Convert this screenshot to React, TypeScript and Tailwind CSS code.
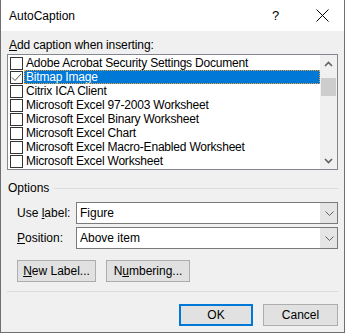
import { useState } from 'react'

const ITEMS = [
  'Adobe Acrobat Security Settings Document',
  'Bitmap Image',
  'Citrix ICA Client',
  'Microsoft Excel 97-2003 Worksheet',
  'Microsoft Excel Binary Worksheet',
  'Microsoft Excel Chart',
  'Microsoft Excel Macro-Enabled Worksheet',
  'Microsoft Excel Worksheet',
]

function Chevron({ up = false, className = '' }: { up?: boolean; className?: string }) {
  return (
    <svg width="9" height="6" viewBox="0 0 9 6" className={className}>
      <polyline
        points={up ? '1,5 4.5,1.5 8,5' : '1,1 4.5,4.5 8,1'}
        fill="none"
        stroke="currentColor"
        strokeWidth="1.6"
      />
    </svg>
  )
}

function Combo({ value }: { value: string }) {
  return (
    <div className="flex-1 h-[22px] flex bg-white border border-[#7a7a7a]">
      <div className="flex-1 pl-[3px] leading-[20px]">{value}</div>
      <div className="w-[17px] bg-[#e5e5e5] border-l border-[#e5e5e5] flex items-center justify-center text-[#606060]">
        <svg width="9" height="5" viewBox="0 0 9 5">
          <polyline points="0.5,0.5 4.5,4.5 8.5,0.5" fill="none" stroke="currentColor" strokeWidth="1" />
        </svg>
      </div>
    </div>
  )
}

export default function App() {
  const [selected, setSelected] = useState(1)

  return (
    <div className="w-[346px] h-[334px] bg-white" style={{ fontFamily: '"Liberation Sans", Arial, sans-serif' }}>
      <div className="w-[345px] h-[333px] flex flex-col border-l border-r border-b border-[#6f6f6f] text-[12px] text-black">
        {/* title bar */}
        <div className="h-[31px] bg-white flex items-center pl-[8px]">
          <span className="flex-1">AutoCaption</span>
          <span className="w-[12px] mr-[32px] text-[13px]">?</span>
          <svg width="13" height="13" viewBox="0 0 13 13" className="mr-[15px]">
            <path d="M0.5 0.5 L12.5 12.5 M12.5 0.5 L0.5 12.5" stroke="#000" strokeWidth="1" />
          </svg>
        </div>

        <div className="flex-1 bg-[#f0f0f0] px-[6px] flex flex-col">
          <div className="mt-[6px] h-[16px] leading-[16px] pl-[2px] tracking-[-0.1px]">
            <span className="underline">A</span>dd caption when inserting:
          </div>

          {/* list box */}
          <div className="mt-[1px] h-[116px] flex bg-white border border-[#828790]">
            <div className="flex-1 py-[1px] pl-[2px]">
              {ITEMS.map((item, i) => (
                <div key={item} className="h-[14px] flex items-center" onClick={() => setSelected(i)}>
                  <div className="w-[13px] h-[13px] border border-[#333] bg-white flex items-center justify-center">
                    {i === 1 && (
                      <svg width="11" height="11" viewBox="0 0 11 11">
                        <polyline points="1,5.5 4,8.5 10,2" fill="none" stroke="#555" strokeWidth="1" />
                      </svg>
                    )}
                  </div>
                  <div
                    className={
                      'ml-[1px] flex-1 h-[14px] leading-[14px] pl-[2px] whitespace-nowrap tracking-[-0.2px] ' +
                      (i === selected ? 'bg-[#0078d7] text-white outline outline-1 outline-dotted outline-[#f0a030] -outline-offset-1' : '')
                    }
                  >
                    {item}
                  </div>
                </div>
              ))}
            </div>
            {/* scrollbar */}
            <div className="w-[17px] bg-[#f0f0f0] flex flex-col items-center">
              <div className="h-[17px] flex items-center justify-center text-[#606060]">
                <Chevron up />
              </div>
              <div className="mt-[6px] w-[15px] h-[18px] bg-[#cdcdcd]" />
              <div className="flex-1" />
              <div className="h-[17px] flex items-center justify-center text-[#606060]">
                <Chevron />
              </div>
            </div>
          </div>

          {/* options */}
          <div className="mt-[10px] h-[16px] flex items-center pl-[1px]">
            <span className="leading-[16px]">Options</span>
            <div className="flex-1 ml-[5px] h-px bg-[#dcdcdc]" />
          </div>

          <div className="mt-[6px] flex items-center pl-[10px]">
            <span className="w-[59px]">
              Use <span className="underline">l</span>abel:
            </span>
            <Combo value="Figure" />
          </div>
          <div className="mt-[3px] flex items-center pl-[10px]">
            <span className="w-[59px]">
              <span className="underline">P</span>osition:
            </span>
            <Combo value="Above item" />
          </div>

          <div className="mt-[11px] flex pl-[10px] gap-[10px]">
            <button className="w-[79px] h-[22px] bg-[#e1e1e1] border border-[#adadad]">
              <span className="underline">N</span>ew Label...
            </button>
            <button className="w-[84px] h-[22px] bg-[#e1e1e1] border border-[#adadad]">
              N<span className="underline">u</span>mbering...
            </button>
          </div>

          <div className="mt-[9px] h-px bg-[#dcdcdc]" />

          <div className="mt-[12px] flex justify-end gap-[10px]">
            <button className="w-[74px] h-[22px] bg-[#e1e1e1] border-2 border-[#0078d7]">OK</button>
            <button className="w-[75px] h-[22px] bg-[#e1e1e1] border border-[#adadad]">Cancel</button>
          </div>
        </div>
      </div>
    </div>
  )
}
